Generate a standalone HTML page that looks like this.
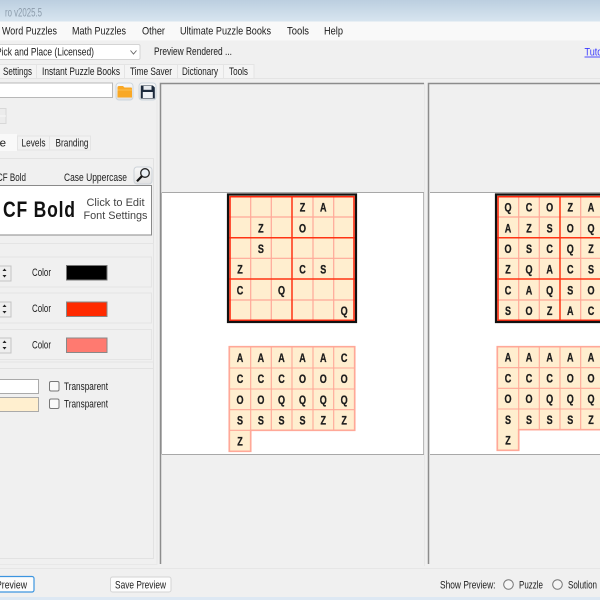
<!DOCTYPE html>
<html><head><meta charset="utf-8"><style>
html,body{margin:0;padding:0;width:600px;height:600px;overflow:hidden;background:#f0f0f0}
svg{display:block;filter:blur(.25px)}
text{font-family:"Liberation Sans",sans-serif;font-size:10.6px;fill:#1c1c1c}
.g text{font-weight:bold;font-size:12.2px;fill:#1c1c1c;stroke:#1c1c1c;stroke-width:.3px;text-anchor:middle}
</style></head><body>
<svg xmlns="http://www.w3.org/2000/svg" width="600" height="600" viewBox="0 0 600 600">
<defs>
<linearGradient id="tb" x1="0" y1="0" x2="0" y2="1"><stop offset="0" stop-color="#bccfe0"/><stop offset="1" stop-color="#d8e5f0"/></linearGradient>
<linearGradient id="btn" x1="0" y1="0" x2="0" y2="1"><stop offset="0" stop-color="#f8f8f8"/><stop offset="1" stop-color="#e2e2e2"/></linearGradient>
</defs>
<rect width="600" height="600" fill="#f0f0f0"/>
<rect width="600" height="21.5" fill="url(#tb)"/>
<text x="5" y="16.500" textLength="37" lengthAdjust="spacingAndGlyphs" style="fill:#8c9cab;font-size:11.500px">ro v2025.5</text>
<rect y="21.500" width="600" height="19" fill="#f9f9f9"/>
<text x="2" y="34.500" textLength="55" lengthAdjust="spacingAndGlyphs">Word Puzzles</text>
<text x="72" y="34.500" textLength="54" lengthAdjust="spacingAndGlyphs">Math Puzzles</text>
<text x="142" y="34.500" textLength="23" lengthAdjust="spacingAndGlyphs">Other</text>
<text x="180" y="34.500" textLength="91" lengthAdjust="spacingAndGlyphs">Ultimate Puzzle Books</text>
<text x="287" y="34.500" textLength="22" lengthAdjust="spacingAndGlyphs">Tools</text>
<text x="324" y="34.500" textLength="19" lengthAdjust="spacingAndGlyphs">Help</text>

<rect x="-3" y="44.500" width="143" height="15" rx="1.500" fill="#fff" stroke="#d4d4d4"/>
<text x="-4" y="55.500" textLength="98" lengthAdjust="spacingAndGlyphs">Pick and Place (Licensed)</text>
<path d="M130.500 50.500l3 3.500 3-3.500" fill="none" stroke="#666" stroke-width=".9"/>
<text x="154" y="55" textLength="78" lengthAdjust="spacingAndGlyphs">Preview Rendered ...</text>
<text x="584.500" y="55.500" textLength="30" lengthAdjust="spacingAndGlyphs" style="fill:#3a3aff">Tutorial</text>
<path d="M584.500 57h16" stroke="#3a3aff" stroke-width=".9"/>

<!-- top tabs -->
<path d="M0 78.500H600" stroke="#e4e4e4"/>
<rect x="-2" y="64.500" width="256" height="14" fill="#f4f4f4" stroke="#e4e4e4"/>
<path d="M36.500 64.500v14M124.500 64.500v14M177.500 64.500v14M223.500 64.500v14" stroke="#e4e4e4"/>
<text x="3" y="75" textLength="29" lengthAdjust="spacingAndGlyphs">Settings</text>
<text x="42" y="75" textLength="78" lengthAdjust="spacingAndGlyphs">Instant Puzzle Books</text>
<text x="130" y="75" textLength="42" lengthAdjust="spacingAndGlyphs">Time Saver</text>
<text x="182" y="75" textLength="36" lengthAdjust="spacingAndGlyphs">Dictionary</text>
<text x="229" y="75" textLength="19" lengthAdjust="spacingAndGlyphs">Tools</text>

<!-- path input and icons -->
<rect x="-2" y="83" width="114.500" height="14.500" fill="#fff" stroke="#b8b8b8"/>
<rect x="116" y="83" width="17" height="17" rx="3" fill="url(#btn)" stroke="#ccd6de"/>
<path d="M117.500 87.500q0-1.500 1.500-1.500h4l1.500 1.500h6.500q1 0 1 1v9h-14.500z" fill="#f9a825"/>
<path d="M117.500 90h14.500" stroke="#fbc560" stroke-width=".8"/>
<rect x="139" y="83" width="17" height="17" rx="3" fill="url(#btn)" stroke="#ccd6de"/>
<path d="M140.800 85.500h12l2 2v11h-14z" fill="#1c2a3c"/>
<rect x="143.500" y="86" width="8" height="3.800" fill="#e8ecf0"/>
<rect x="142.800" y="92" width="10" height="6" fill="#f0f2f5"/>

<!-- little spinner -->
<rect x="-3" y="108.500" width="9" height="15" fill="#ececec" stroke="#d8d8d8"/>
<path d="M0 116h6" stroke="#f8f8f8"/>

<!-- sub tabs -->
<rect x="-2" y="134" width="19" height="17" fill="#f9f9f9"/>
<text x="-3" y="146.500" textLength="9" lengthAdjust="spacingAndGlyphs">le</text>
<rect x="17.500" y="136" width="32" height="14" fill="#f2f2f2" stroke="#e4e4e4"/>
<rect x="49.500" y="136" width="41" height="14" fill="#f2f2f2" stroke="#e4e4e4"/>
<text x="21.500" y="146.500" textLength="24" lengthAdjust="spacingAndGlyphs">Levels</text>
<text x="55.500" y="146.500" textLength="33" lengthAdjust="spacingAndGlyphs">Branding</text>
<path d="M0 158.500H153.500V558.500H0" fill="none" stroke="#e2e2e2"/>
<path d="M157 100V564.500H0" fill="none" stroke="#e8e8e8"/>

<text x="-3" y="181" textLength="29" lengthAdjust="spacingAndGlyphs">CF Bold</text>
<text x="64" y="181" textLength="63" lengthAdjust="spacingAndGlyphs">Case Uppercase</text>
<rect x="134" y="167" width="18" height="17" rx="3" fill="url(#btn)" stroke="#ccd2d8"/>
<circle cx="145" cy="173" r="4.300" fill="#eaf0f5" stroke="#222" stroke-width="1.300"/>
<path d="M141.800 176.300l-4.800 5" stroke="#111" stroke-width="2.200"/>

<rect x="-3" y="185.500" width="154.500" height="49.500" fill="#fff" stroke="#8a8a8a"/>
<g transform="scale(.78,1)"><text x="3.850" y="217" textLength="92.300" lengthAdjust="spacing" style="font-size:22.500px;font-weight:bold;fill:#111">CF Bold</text></g>
<text x="86.500" y="206" textLength="58" lengthAdjust="spacingAndGlyphs" style="font-size:11px;fill:#444">Click to Edit</text>
<text x="83.500" y="219" textLength="64" lengthAdjust="spacingAndGlyphs" style="font-size:11px;fill:#444">Font Settings</text>

<!-- style group -->
<path d="M0 243.500H153.500V362H0" fill="#f0f0f0" stroke="#e4e4e4"/>
<path d="M0 257H151.500V287H0M0 293H151.500V323H0M0 329.500H151.500V359.500H0" fill="none" stroke="#e4e4e4"/>
<rect x="-2" y="266" width="13" height="15" fill="#eee" stroke="#c4c4c4"/>
<rect x="-2" y="302" width="13" height="15" fill="#eee" stroke="#c4c4c4"/>
<rect x="-2" y="338" width="13" height="15" fill="#eee" stroke="#c4c4c4"/>
<path d="M2.500 271h4l-2-2.500zM2.500 275h4l-2 2.500zM2.500 307h4l-2-2.500zM2.500 311h4l-2 2.500zM2.500 343h4l-2-2.500zM2.500 347h4l-2 2.500z" fill="#222"/>
<text x="32" y="276" textLength="19" lengthAdjust="spacingAndGlyphs">Color</text>
<text x="32" y="312" textLength="19" lengthAdjust="spacingAndGlyphs">Color</text>
<text x="32" y="348.500" textLength="19" lengthAdjust="spacingAndGlyphs">Color</text>
<rect x="66.500" y="265.500" width="40.500" height="14.500" fill="#000" stroke="#777"/>
<rect x="66.500" y="302" width="40.500" height="14.500" fill="#ff2a00" stroke="#888"/>
<rect x="66.500" y="338" width="40.500" height="14.500" fill="#ff7a70" stroke="#888"/>

<!-- colour group -->
<path d="M0 368.500H153.500" fill="none" stroke="#e2e2e2"/>
<rect x="-2" y="379.500" width="40.500" height="14" fill="#fff" stroke="#aaa"/>
<rect x="-2" y="397.500" width="40.500" height="14" fill="#ffefcf" stroke="#aaa"/>
<rect x="49.500" y="381.500" width="9.500" height="9.500" rx="1.500" fill="#fafafa" stroke="#777"/>
<rect x="49.500" y="399" width="9.500" height="9.500" rx="1.500" fill="#fafafa" stroke="#777"/>
<text x="64" y="390" textLength="44" lengthAdjust="spacingAndGlyphs">Transparent</text>
<text x="64" y="407.500" textLength="44" lengthAdjust="spacingAndGlyphs">Transparent</text>

<!-- preview panels -->
<path d="M424.500 83V566" stroke="#e8e8e8"/>
<path d="M160.500 564V83.500H424M428.500 564V83.500H600" fill="none" stroke="#8c8c8c" stroke-width="1.500"/>
<rect x="162" y="192.500" width="262" height="262" fill="#fff"/>
<path d="M162 192.500H424M162 454.500H424" stroke="#a8a8a8"/>
<path d="M423.500 192.500V454.500M161.500 192.500V454.500" stroke="#a8a8a8" stroke-width=".8"/>
<rect x="430" y="192.500" width="170" height="262" fill="#fff"/>
<path d="M430 192.500H600M430 454.500H600" stroke="#a8a8a8"/>
<path d="M0 568.500H600" stroke="#e6e6e6"/>

<!-- left puzzle -->
<rect x="228" y="194.500" width="128" height="127.500" fill="#ffeecf"/>
<path d="M250.700 196V321M271.300 196V321M313 196V321M333.700 196V321M229 217H355M229 258.300H355M229 300H355" stroke="#ffa898" stroke-width="1.200"/>
<path d="M292 196V321M229 237.700H355M229 279H355" stroke="#ff3414" stroke-width="1.500"/>
<rect x="230" y="196.700" width="124" height="123.600" fill="none" stroke="#ff2a10" stroke-width="1.600"/>
<rect x="228" y="194.500" width="128" height="127.500" fill="none" stroke="#111" stroke-width="2.200"/>
<g class="g" transform="scale(.74,1)">
<text x="408.800 436.900" y="211.500">ZA</text>
<text x="352.600 408.800" y="232.300">ZO</text>
<text x="352.600" y="253">S</text>
<text x="324.300 408.800 436.900" y="273.600">ZCS</text>
<text x="324.300 380.500" y="294.500">CQ</text>
<text x="465.100" y="315.200">Q</text>
</g>

<!-- left tray -->
<path d="M229.300 346.700H354.700V430.300H250.700V451.300H229.300Z" fill="#ffeecf" stroke="#ffa898" stroke-width="1.700"/>
<path d="M250.700 346.700V430.300M271.300 346.700V430.300M292 346.700V430.300M313 346.700V430.300M333.700 346.700V430.300M229.300 368H354.700M229.300 389H354.700M229.300 409.700H354.700M229.300 430.300H354.700" stroke="#ffa898" stroke-width="1.100"/>
<g class="g" transform="scale(.74,1)">
<text x="324.300 352.600 380.500 408.800 436.900 465.100" y="361.900">AAAAAC</text>
<text x="324.300 352.600 380.500 408.800 436.900 465.100" y="383">CCCOOO</text>
<text x="324.300 352.600 380.500 408.800 436.900 465.100" y="403.800">OOQQQQ</text>
<text x="324.300 352.600 380.500 408.800 436.900 465.100" y="424.500">SSSSZZ</text>
<text x="324.300" y="445.400">Z</text>
</g>

<!-- right puzzle -->
<rect x="496" y="194.500" width="110" height="127.500" fill="#ffeecf"/>
<path d="M518.700 196V321M539.300 196V321M580.700 196V321M497 217H600M497 258.300H600M497 300H600" stroke="#ffa898" stroke-width="1.200"/>
<path d="M560 196V321M497 237.700H600M497 279H600" stroke="#ff3414" stroke-width="1.500"/>
<path d="M600 196.700H498V320.300H600" fill="none" stroke="#ff2a10" stroke-width="1.600"/>
<path d="M600 194.500H496V322H600" fill="none" stroke="#111" stroke-width="2.200"/>
<g class="g" transform="scale(.74,1)">
<text x="686.500 714.900 742.800 770.700 798.600" y="211.500">QCOZA</text>
<text x="686.500 714.900 742.800 770.700 798.600" y="232.300">AZSOQ</text>
<text x="686.500 714.900 742.800 770.700 798.600" y="253">OSCQZ</text>
<text x="686.500 714.900 742.800 770.700 798.600" y="273.600">ZQACS</text>
<text x="686.500 714.900 742.800 770.700 798.600" y="294.500">CAQSO</text>
<text x="686.500 714.900 742.800 770.700 798.600" y="315.200">SOZAC</text>
</g>

<!-- right tray -->
<path d="M605 346.700H497.300V450.300H518.700V429.700H605Z" fill="#ffeecf" stroke="#ffa898" stroke-width="1.700"/>
<path d="M518.700 346.700V429.700M539.300 346.700V429.700M560 346.700V429.700M580.700 346.700V429.700M497.300 367.700H600M497.300 388.300H600M497.300 409H600" stroke="#ffa898" stroke-width="1.100"/>
<g class="g" transform="scale(.74,1)">
<text x="686.500 714.900 742.800 770.700 798.600" y="361.700">AAAAA</text>
<text x="686.500 714.900 742.800 770.700 798.600" y="382.500">CCCOO</text>
<text x="686.500 714.900 742.800 770.700 798.600" y="403.200">OOQQQ</text>
<text x="686.500 714.900 742.800 770.700 798.600" y="423.900">SSSSZ</text>
<text x="686.500" y="444.500">Z</text>
</g>

<!-- bottom bar -->
<rect x="-4" y="576.500" width="38" height="15.500" rx="2" fill="#fcfcfc" stroke="#3c95e0" stroke-width="1.200"/>
<text x="-4" y="588.500" textLength="31" lengthAdjust="spacingAndGlyphs">Preview</text>
<rect x="110.500" y="577" width="60.500" height="15" rx="2" fill="#fcfcfc" stroke="#d4d4d4"/>
<text x="115" y="588.500" textLength="51" lengthAdjust="spacingAndGlyphs">Save Preview</text>
<text x="440" y="588.500" textLength="55.500" lengthAdjust="spacingAndGlyphs">Show Preview:</text>
<circle cx="508.500" cy="584.500" r="4.800" fill="#f6f6f6" stroke="#777"/>
<text x="519" y="588.500" textLength="24" lengthAdjust="spacingAndGlyphs">Puzzle</text>
<circle cx="557.500" cy="584.500" r="4.800" fill="#f6f6f6" stroke="#777"/>
<text x="568" y="588.500" textLength="29" lengthAdjust="spacingAndGlyphs">Solution</text>
<rect y="597" width="600" height="3" fill="#dde8f3"/>
</svg>
</body></html>
